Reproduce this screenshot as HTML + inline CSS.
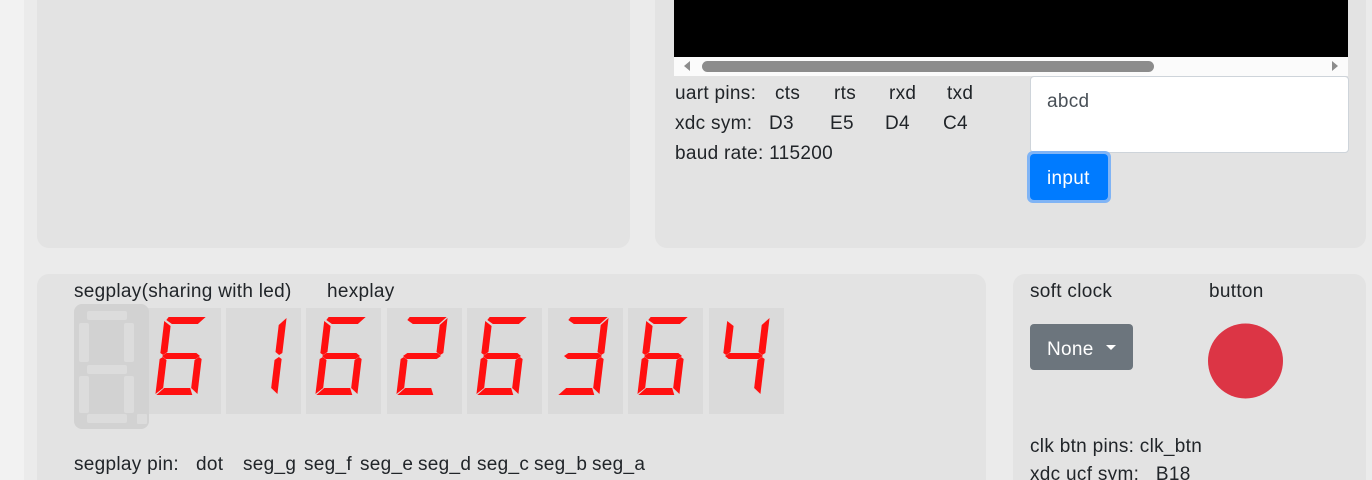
<!DOCTYPE html>
<html style="overflow:hidden;height:480px"><head><style>
body{margin:0;width:1372px;height:480px;overflow:hidden;background:#ebebeb;font-family:"Liberation Sans",sans-serif;font-size:19px;letter-spacing:0.3px;color:#212529;position:relative}
.a{position:absolute;white-space:nowrap;line-height:20px;margin-top:2px}
.card{position:absolute;background:#e3e3e3;border-radius:12px}
.box{position:absolute;top:308px;width:75px;height:106px;background:#dadada}
</style></head><body>
<div style="position:absolute;left:0;top:0;width:24px;height:480px;background:#f2f2f2"></div>
<div class="card" style="left:37px;top:-20px;width:593px;height:268px"></div>
<div class="card" style="left:655px;top:-20px;width:711px;height:268px"></div>
<div class="card" style="left:37px;top:274px;width:949px;height:206px;border-radius:12px 12px 0 0"></div>
<div class="card" style="left:1013px;top:274px;width:353px;height:206px;border-radius:12px 12px 0 0"></div>

<div style="position:absolute;left:674px;top:0;width:674px;height:57px;background:#000"></div>
<div style="position:absolute;left:674px;top:57px;width:674px;height:19px;background:#fbfbfb"></div>
<div style="position:absolute;left:702px;top:61px;width:452px;height:11px;background:#8c8c8c;border-radius:6px"></div>
<div style="position:absolute;left:684px;top:61px;width:0;height:0;border-top:5px solid transparent;border-bottom:5px solid transparent;border-right:6px solid #8c8c8c"></div>
<div style="position:absolute;left:1332px;top:61px;width:0;height:0;border-top:5px solid transparent;border-bottom:5px solid transparent;border-left:6px solid #8c8c8c"></div>

<div class="a" style="left:675px;top:82px">uart pins:</div>
<div class="a" style="left:775px;top:82px">cts</div>
<div class="a" style="left:834px;top:82px">rts</div>
<div class="a" style="left:889px;top:82px">rxd</div>
<div class="a" style="left:947px;top:82px">txd</div>
<div class="a" style="left:675px;top:112px">xdc sym:</div>
<div class="a" style="left:769px;top:112px">D3</div>
<div class="a" style="left:830px;top:112px">E5</div>
<div class="a" style="left:885px;top:112px">D4</div>
<div class="a" style="left:943px;top:112px">C4</div>
<div class="a" style="left:675px;top:142px">baud rate: 115200</div>

<div style="position:absolute;left:1030px;top:76px;width:317px;height:75px;background:#fff;border:1px solid #ced4da;border-radius:4px"></div>
<div class="a" style="left:1047px;top:90px;color:#495057">abcd</div>
<div style="position:absolute;left:1027px;top:151px;width:84px;height:52px;background:#80b4f5;border-radius:6px"></div>
<div style="position:absolute;left:1030px;top:154px;width:78px;height:46px;background:#007bff;border-radius:4px"></div>
<div class="a" style="left:1047px;top:167px;color:#fff">input</div>

<div class="a" style="left:74px;top:280px">segplay(sharing with led)</div>
<div class="a" style="left:327px;top:280px">hexplay</div>
<div class="a" style="left:74px;top:453px">segplay pin:</div>
<div class="a" style="left:196px;top:453px">dot</div>
<div class="a" style="left:243px;top:453px">seg_g</div>
<div class="a" style="left:304px;top:453px">seg_f</div>
<div class="a" style="left:360px;top:453px">seg_e</div>
<div class="a" style="left:418px;top:453px">seg_d</div>
<div class="a" style="left:477px;top:453px">seg_c</div>
<div class="a" style="left:534px;top:453px">seg_b</div>
<div class="a" style="left:592px;top:453px">seg_a</div>

<div class="box" style="left:146px"></div>
<div class="box" style="left:226px"></div>
<div class="box" style="left:306px"></div>
<div class="box" style="left:387px"></div>
<div class="box" style="left:467px"></div>
<div class="box" style="left:548px"></div>
<div class="box" style="left:628px"></div>
<div class="box" style="left:709px"></div>

<svg style="position:absolute;left:0;top:0" width="1372" height="480">
<defs>
<polygon id="sa" points="18,9 55,9 48,16 22,16 16,12"/>
<polygon id="sf" points="14,13 21,18 21,44 17,47 14,45"/>
<polygon id="sb" points="56,10 56,45 53,47 49,44 49,17"/>
<polygon id="sg" points="16,48 20,45 50,45 54,48 50,51 20,51"/>
<polygon id="se" points="14,51 17,49 21,52 21,80 14,86"/>
<polygon id="sc" points="56,51 56,86 49,80 49,52 53,49"/>
<polygon id="sd" points="15,87 22,80 48,80 51,87"/>
</defs>
<rect x="74" y="304" width="75" height="125" rx="8" fill="#d2d2d2"/>
<g fill="#dcdcdc">
<rect x="87" y="311" width="40" height="9" rx="2"/>
<rect x="79" y="323" width="10" height="39" rx="2"/>
<rect x="124" y="323" width="10" height="39" rx="2"/>
<rect x="87" y="365" width="40" height="9" rx="2"/>
<rect x="79" y="376" width="10" height="37" rx="2"/>
<rect x="124" y="376" width="10" height="37" rx="2"/>
<rect x="87" y="414" width="40" height="9" rx="2"/>
<rect x="137" y="414" width="10" height="10" rx="1"/>
</g>
<g fill="#ff1010">
<g transform="translate(146,308) matrix(1,0,-0.12,1,5.76,0)"><use href="#sa"/><use href="#sf"/><use href="#sg"/><use href="#se"/><use href="#sc"/><use href="#sd"/></g>
<g transform="translate(226,308) matrix(1,0,-0.12,1,5.76,0)"><use href="#sb"/><use href="#sc"/></g>
<g transform="translate(306,308) matrix(1,0,-0.12,1,5.76,0)"><use href="#sa"/><use href="#sf"/><use href="#sg"/><use href="#se"/><use href="#sc"/><use href="#sd"/></g>
<g transform="translate(387,308) matrix(1,0,-0.12,1,5.76,0)"><use href="#sa"/><use href="#sb"/><use href="#sg"/><use href="#se"/><use href="#sd"/></g>
<g transform="translate(467,308) matrix(1,0,-0.12,1,5.76,0)"><use href="#sa"/><use href="#sf"/><use href="#sg"/><use href="#se"/><use href="#sc"/><use href="#sd"/></g>
<g transform="translate(548,308) matrix(1,0,-0.12,1,5.76,0)"><use href="#sa"/><use href="#sb"/><use href="#sg"/><use href="#sc"/><use href="#sd"/></g>
<g transform="translate(628,308) matrix(1,0,-0.12,1,5.76,0)"><use href="#sa"/><use href="#sf"/><use href="#sg"/><use href="#se"/><use href="#sc"/><use href="#sd"/></g>
<g transform="translate(709,308) matrix(1,0,-0.12,1,5.76,0)"><use href="#sf"/><use href="#sg"/><use href="#sb"/><use href="#sc"/></g>
</g>
<circle cx="1245.5" cy="361" r="37.5" fill="#dc3545"/>
</svg>

<div class="a" style="left:1030px;top:280px">soft clock</div>
<div class="a" style="left:1209px;top:280px">button</div>
<div style="position:absolute;left:1030px;top:324px;width:103px;height:46px;background:#6c757d;border-radius:4px"></div>
<div class="a" style="left:1047px;top:338px;color:#fff">None</div>
<div style="position:absolute;left:1106px;top:345px;width:0;height:0;border-left:5px solid transparent;border-right:5px solid transparent;border-top:5px solid #fff"></div>
<div class="a" style="left:1030px;top:435px">clk btn pins: clk_btn</div>
<div class="a" style="left:1030px;top:463px">xdc ucf sym: &nbsp;&nbsp;B18</div>
</body></html>
